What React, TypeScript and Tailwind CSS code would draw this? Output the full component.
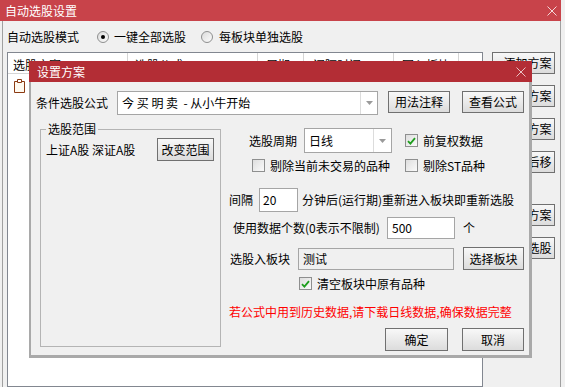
import React from "react";

const Btn = ({ children, className = "" }: { children?: React.ReactNode; className?: string }) => (
  <div
    className={`flex items-center justify-center border border-[#707070] bg-linear-to-b from-[#f8f8f8] to-[#dcdcdc] text-[12px] leading-none text-black shrink-0 ${className}`}
  >
    {children}
  </div>
);

const Check = ({ checked = false }: { checked?: boolean }) => (
  <div className="w-[13px] h-[13px] shrink-0 border border-[#8e8f8f] bg-linear-to-br from-[#dedede] to-[#fafafa] flex items-center justify-center">
    {checked && (
      <svg width="9" height="8" viewBox="0 0 9 8">
        <path d="M1 4.2 L3.4 6.6 L8 1.2" stroke="#1e9e1e" strokeWidth="1.8" fill="none" />
      </svg>
    )}
  </div>
);

const Radio = ({ on = false }: { on?: boolean }) => (
  <div className="w-[12px] h-[12px] shrink-0 rounded-full border border-[#8e8f8f] bg-linear-to-br from-[#dcdcdc] to-[#fbfbfb] flex items-center justify-center">
    {on && <div className="w-[4px] h-[4px] rounded-full bg-black" />}
  </div>
);

const Arrow = () => (
  <svg width="7" height="4" viewBox="0 0 7 4">
    <path d="M0 0 L7 0 L3.5 4 Z" fill="#9a9a9a" />
  </svg>
);

const CloseX = ({ color }: { color: string }) => (
  <svg width="10" height="10" viewBox="0 0 10 10">
    <path d="M0.5 0.5 L9.5 9.5 M9.5 0.5 L0.5 9.5" stroke={color} strokeWidth="1" />
  </svg>
);

export default function App() {
  return (
    <div className="relative w-[565px] h-[387px] overflow-hidden bg-[#f0f0f0] font-[family-name:'Noto_Sans_CJK_SC',sans-serif] text-[12px] leading-[16px] text-black">
      {/* outer title bar */}
      <div className="w-[561px] h-[21px] bg-[#c8434a] flex items-center justify-between pl-[5px] pr-[4px]">
        <span className="text-white">自动选股设置</span>
        <CloseX color="#f3d7d8" />
      </div>

      {/* outer body */}
      <div className="ml-[2px] w-[559px] h-[366px] border-x border-[#a0a0a0] flex flex-col">
        <div className="mt-[8px] ml-[4px] h-[16px] flex items-center">
          <span className="w-[90px]">自动选股模式</span>
          <Radio on />
          <span className="ml-[5px] w-[87px]">一键全部选股</span>
          <Radio />
          <span className="ml-[6px]">每板块单独选股</span>
        </div>

        <div className="mt-[7px] ml-[4px] flex flex-1 min-h-0">
          {/* table */}
          <div className="w-[476px] border border-[#828790] bg-white flex flex-col">
            <div className="h-[21px] flex border-b border-[#d5d5d5] shrink-0">
              <div className="w-[120px] border-r border-[#d5d5d5] pl-[5px] pt-[4px]">选股方案</div>
              <div className="w-[130px] border-r border-[#d5d5d5] pl-[7px] pt-[4px]">选股公式</div>
              <div className="w-[46px] border-r border-[#d5d5d5] pl-[8px] pt-[4px]">周期</div>
              <div className="w-[90px] border-r border-[#d5d5d5] pl-[9px] pt-[4px]">间隔时间</div>
              <div className="w-[65px] border-r border-[#d5d5d5] pl-[8px] pt-[4px]">写入板块</div>
              <div className="flex-1" />
            </div>
            <div className="pl-[5px] pt-[5px]">
              <svg width="13" height="14" viewBox="0 0 13 14">
                <path d="M1.5 2.5 H11.5 V13.5 H1.5 Z" stroke="#8b3a12" strokeWidth="1" fill="#fffaf0" />
                <path d="M4.5 0.5 H8.5 V3.5 H4.5 Z" stroke="#8b3a12" strokeWidth="1" fill="#fff" />
              </svg>
            </div>
          </div>

          {/* right buttons */}
          <div className="ml-[9px] flex flex-col">
            <Btn className="w-[63px] h-[22px] pl-[8px]">添加方案</Btn>
            <Btn className="w-[63px] h-[22px] pl-[8px] mt-[11px]">修改方案</Btn>
            <Btn className="w-[63px] h-[22px] pl-[8px] mt-[11px]">删除方案</Btn>
            <Btn className="w-[63px] h-[22px] pl-[8px] mt-[11px]">方案后移</Btn>
            <Btn className="w-[63px] h-[22px] pl-[8px] mt-[31px]">导出方案</Btn>
            <Btn className="w-[63px] h-[22px] pl-[8px] mt-[11px]">执行选股</Btn>
          </div>
        </div>
      </div>

      {/* dialog */}
      <div className="absolute left-[29px] top-[61px] w-[503px] h-[297px] flex flex-col">
        <div className="h-[21px] bg-[#b32d35] flex items-center justify-between pl-[8px] pr-[6px] shrink-0">
          <span className="text-white">设置方案</span>
          <CloseX color="#e9c2c4" />
        </div>
        <div className="flex-1 bg-[#f0f0f0] border-l-2 border-r-[3px] border-b-[3px] border-[#a9a9a9] flex flex-col">
          {/* row 1 */}
          <div className="mt-[9px] flex items-start">
            <span className="ml-[5px] w-[72px] mt-[4px]">条件选股公式</span>
            <div className="ml-[9px] w-[261px] h-[24px] border border-[#a5a5a5] bg-white flex items-center">
              <span className="pl-[4px] flex-1">今 买 明 卖&nbsp;&nbsp;- 从小牛开始</span>
              <div className="w-[17px] h-full border-l border-[#dcdcdc] flex items-center justify-center">
                <Arrow />
              </div>
            </div>
            <Btn className="ml-[10px] w-[62px] h-[22px]">用法注释</Btn>
            <Btn className="ml-[12px] w-[62px] h-[22px]">查看公式</Btn>
          </div>

          {/* row 2 */}
          <div className="mt-[7px] flex items-start">
            <fieldset className="ml-[9px] w-[181px] h-[225px] border border-[#b4b4b4] pl-[5px]">
              <legend className="px-[2px] leading-[14px]">选股范围</legend>
              <div className="mt-[2px] flex items-center">
                <span className="w-[111px]">上证A股 深证A股</span>
                <Btn className="w-[57px] h-[23px]">改变范围</Btn>
              </div>
            </fieldset>

            <div className="ml-[8px] flex flex-col">
              {/* 选股周期 */}
              <div className="mt-[6px] flex items-center">
                <span className="ml-[20px] w-[55px]">选股周期</span>
                <div className="w-[88px] h-[25px] border border-[#a5a5a5] bg-white flex items-center">
                  <span className="pl-[4px] flex-1">日线</span>
                  <div className="w-[18px] h-full border-l border-[#dcdcdc] flex items-center justify-center">
                    <Arrow />
                  </div>
                </div>
                <div className="ml-[13px]">
                  <Check checked />
                </div>
                <span className="ml-[5px]">前复权数据</span>
              </div>
              {/* 剔除 */}
              <div className="mt-[5px] flex items-center h-[15px]">
                <div className="ml-[23px]">
                  <Check />
                </div>
                <span className="ml-[5px] w-[135px]">剔除当前未交易的品种</span>
                <Check />
                <span className="ml-[5px]">剔除ST品种</span>
              </div>
              {/* 间隔 */}
              <div className="mt-[15px] flex items-center">
                <span className="w-[30px]">间隔</span>
                <div className="w-[39px] h-[24px] border border-[#a5a5a5] bg-white flex items-center pl-[3px]">20</div>
                <span className="ml-[4px]">分钟后(运行期)重新进入板块即重新选股</span>
              </div>
              {/* 使用数据个数 */}
              <div className="mt-[5px] flex items-center">
                <span className="ml-[4px] w-[154px]">使用数据个数(0表示不限制)</span>
                <div className="w-[68px] h-[22px] border border-[#a5a5a5] bg-white flex items-center pl-[4px]">500</div>
                <span className="ml-[8px]">个</span>
              </div>
              {/* 选股入板块 */}
              <div className="mt-[8px] flex items-center">
                <span className="ml-[1px] w-[68px]">选股入板块</span>
                <div className="w-[156px] h-[22px] border border-[#a5a5a5] bg-[#f0f0f0] flex items-center pl-[4px]">测试</div>
                <Btn className="ml-[9px] w-[61px] h-[23px]">选择板块</Btn>
              </div>
              {/* 清空 */}
              <div className="mt-[6px] flex items-center h-[15px]">
                <div className="ml-[70px]">
                  <Check checked />
                </div>
                <span className="ml-[5px]">清空板块中原有品种</span>
              </div>
              {/* warning */}
              <div className="mt-[13px] text-[#ff0000]">若公式中用到历史数据,请下载日线数据,确保数据完整</div>
              {/* ok/cancel */}
              <div className="mt-[8px] flex">
                <Btn className="ml-[156px] w-[63px] h-[23px]">确定</Btn>
                <Btn className="ml-[14px] w-[62px] h-[23px]">取消</Btn>
              </div>
            </div>
          </div>
        </div>
      </div>
    </div>
  );
}
